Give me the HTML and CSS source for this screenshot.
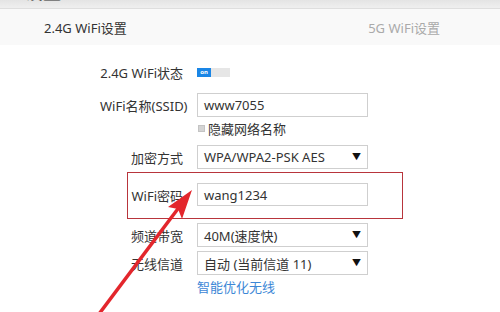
FILE: index.html
```html
<!DOCTYPE html>
<html>
<head>
<meta charset="utf-8">
<link rel="stylesheet" href="styles.css">
</head>
<body>
<div class="page">
  <div class="topstrip"><span class="toptext">设置</span></div>
  <div class="tabs">
    <div class="tab active">2.4G WiFi设置</div>
    <div class="tab">5G WiFi设置</div>
  </div>
  <div class="form">
    <div class="row r-status">
      <div class="label">2.4G WiFi状态</div>
      <div class="toggle"><span class="on">on</span><span class="off"></span></div>
    </div>
    <div class="row r-ssid">
      <div class="label">WiFi名称(SSID)</div>
      <div class="field">www7055</div>
    </div>
    <div class="row r-check">
      <div class="label"></div>
      <div class="check"><span class="box"></span>隐藏网络名称</div>
    </div>
    <div class="row r-enc">
      <div class="label">加密方式</div>
      <div class="field select">WPA/WPA2-PSK AES<span class="caret">▼</span></div>
    </div>
    <div class="highlight">
      <div class="label short">WiFi密码</div>
      <div class="field pw">wang1234</div>
    </div>
    <div class="row r-bw">
      <div class="label">频道带宽</div>
      <div class="field select">40M(速度快)<span class="caret">▼</span></div>
    </div>
    <div class="row r-ch">
      <div class="label">无线信道</div>
      <div class="field select">自动 (当前信道 11)<span class="caret">▼</span></div>
    </div>
    <div class="row r-link">
      <div class="label"></div>
      <div class="link">智能优化无线</div>
    </div>
  </div>
  <svg class="arrow" width="500" height="312" viewBox="0 0 500 312">
    <line x1="96" y1="318" x2="180" y2="206" stroke="#e3262c" stroke-width="3.5"/>
    <polygon points="192,190 182,219 178,209 168,207" fill="#e3262c"/>
  </svg>
</div>
</body>
</html>
```
FILE: styles.css
```css
* { box-sizing: border-box; }
html, body { margin: 0; padding: 0; background: #fff; }
body {
  font-family: "Noto Sans", "Noto Sans CJK SC", sans-serif;
  font-size: 13px;
  color: #333;
  width: 500px;
  height: 312px;
  overflow: hidden;
}
.page { position: relative; width: 500px; height: 312px; overflow: hidden; }
.topstrip {
  height: 9px;
  background: linear-gradient(#e4e4e4, #efefef);
  border-bottom: 1px solid #dedede;
  overflow: hidden;
  padding-left: 25px;
}
.toptext {
  display: block;
  font-size: 18px;
  font-weight: bold;
  line-height: 18px;
  margin-top: -17px;
  color: #333;
}
.tabs {
  height: 36px;
  background: #f9f9f9;
  display: flex;
  align-items: center;
  padding-left: 44px;
}
.tab { font-size: 13px; color: #333; }
.tab + .tab { margin-left: auto; margin-right: 60px; color: #aaa; }
.form { padding-left: 100px; display: flex; flex-direction: column; }
.row { display: flex; align-items: center; }
.label {
  width: 83px;
  text-align: right;
  white-space: nowrap;
  margin-right: 14px;
  color: #333;
}
.field {
  width: 171px;
  height: 24px;
  border: 1px solid #cfcfcf;
  background: #fff;
  padding-left: 6px;
  display: flex;
  align-items: center;
  color: #333;
  position: relative;
}
.caret {
  position: absolute;
  right: 6px;
  top: 6px;
  font-size: 9px;
  line-height: 10px;
  color: #111;
}
.r-status { margin-top: 17px; height: 20px; }
.r-ssid { margin-top: 11px; }
.r-check { margin-top: 2px; height: 18px; }
.r-enc { margin-top: 8px; }
.r-bw { margin-top: 4px; }
.r-ch { margin-top: 4px; }
.r-link { margin-top: 2px; height: 18px; }
.toggle { display: flex; height: 9px; margin-top: 0; }
.toggle .on {
  width: 14px; height: 9px; background: #1a86e6; color: #fff;
  font-size: 6px; line-height: 9px; text-align: center; font-weight: bold;
}
.toggle .off { width: 19px; height: 9px; background: #e6e6e6; }
.check { display: flex; align-items: center; color: #333; }
.box {
  width: 7px; height: 7px; background: #d4d4d4; border: 1px solid #c4c4c4;
  margin-right: 3px; margin-left: 1px;
}
.highlight {
  margin-top: 3px;
  margin-left: 27px;
  width: 276px;
  height: 47px;
  border: 1px solid #b8353c;
  display: flex;
  align-items: center;
}
.label.short { width: 55px; }
.field.pw { height: 23px; margin-top: -2px; }
.link { color: #3d87d6; }
.arrow { position: absolute; left: 0; top: 0; pointer-events: none; }
```
